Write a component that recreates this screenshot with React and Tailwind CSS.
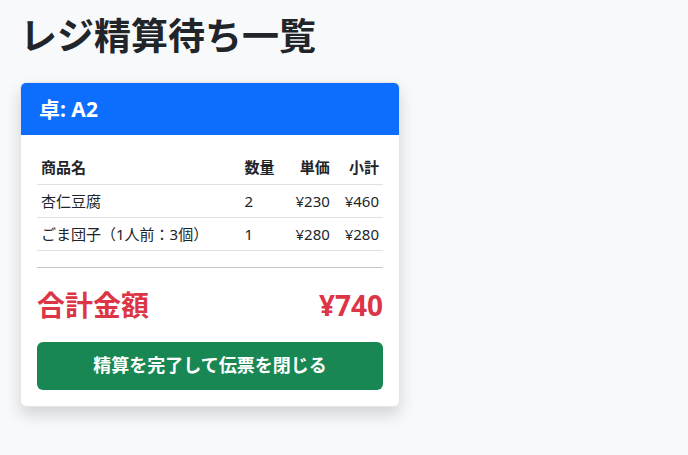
import React from 'react';

const items = [
  { name: '杏仁豆腐', qty: 2, price: 230 },
  { name: 'ごま団子（1人前：3個）', qty: 1, price: 280 },
];

const App = () => {
  const total = items.reduce((sum, i) => sum + i.qty * i.price, 0);

  return (
    <div className="min-h-screen bg-[#f8f9fa] px-5 pt-[14px] text-[#212529] font-['Noto_Sans','Noto_Sans_CJK_JP',sans-serif]">
      <h1 className="text-[37px] font-bold leading-[1.2] mb-[24px]">レジ精算待ち一覧</h1>

      {/* Table card */}
      <div className="w-[380px] bg-white rounded-md border border-black/10 shadow-[0_8px_16px_rgba(0,0,0,0.15)] overflow-hidden">
        <div className="bg-[#0d6efd] text-white h-[52px] px-[18px] flex items-center">
          <h2 className="text-[21px] font-bold">卓: A2</h2>
        </div>
        <div className="p-4">
          <table className="w-full text-[15px]">
            <thead>
              <tr className="h-[33px] border-b border-[#dee2e6] font-bold">
                <th className="px-1 text-left">商品名</th>
                <th className="px-1 text-left">数量</th>
                <th className="px-1 text-right">単価</th>
                <th className="px-1 text-right">小計</th>
              </tr>
            </thead>
            <tbody>
              {items.map((item, index) => (
                <tr key={index} className="h-[33px] border-b border-[#dee2e6]">
                  <td className="px-1">{item.name}</td>
                  <td className="px-1">{item.qty}</td>
                  <td className="px-1 text-right">¥{item.price}</td>
                  <td className="px-1 text-right">¥{item.qty * item.price}</td>
                </tr>
              ))}
            </tbody>
          </table>

          <hr className="mt-4 mb-4 border-[#c4c6c8]" />

          <div className="flex justify-between items-center text-[#dc3545] font-bold text-[28px] h-[42px] mb-4">
            <span>合計金額</span>
            <span>¥{total}</span>
          </div>

          <button className="w-full h-12 bg-[#198754] text-white rounded-md text-[18px] font-bold">
            精算を完了して伝票を閉じる
          </button>
        </div>
      </div>
    </div>
  );
};

export default App;
